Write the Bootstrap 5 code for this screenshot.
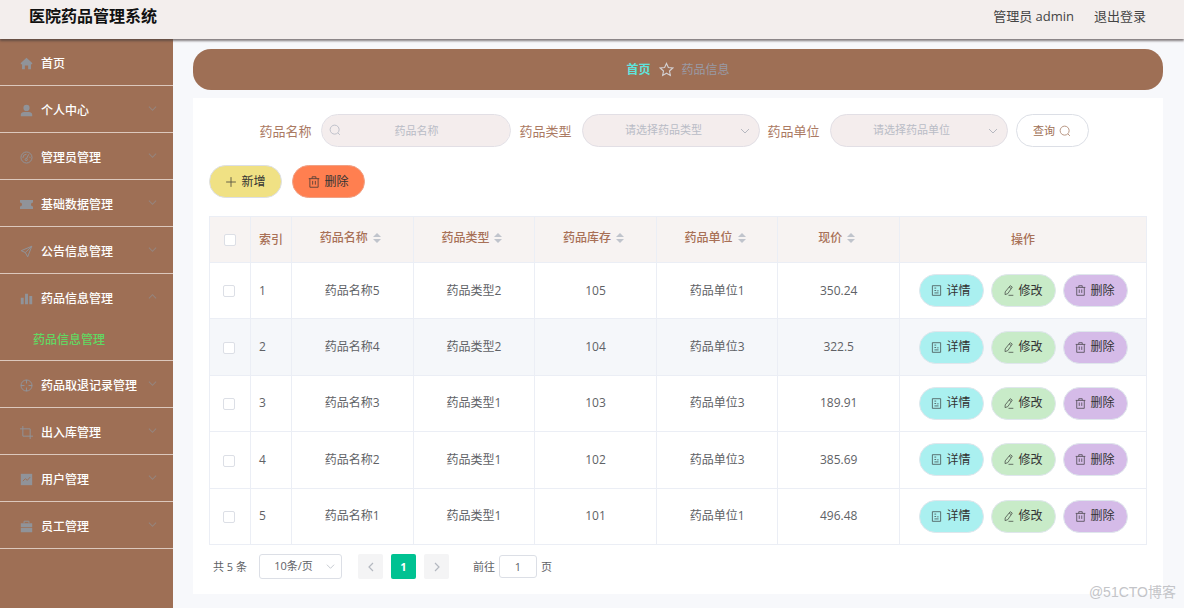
<!DOCTYPE html>
<html lang="zh-CN">
<head>
<meta charset="utf-8">
<meta name="viewport" content="width=device-width, initial-scale=1">
<title>医院药品管理系统</title>
<link href="https://cdn.jsdelivr.net/npm/bootstrap@5.3.0/dist/css/bootstrap.min.css" rel="stylesheet">
<style>
:root{--brown:#9e6f55;--rose:#f4eded;--line:#ebeef5}
body{font-family:"Open Sans","Noto Sans CJK SC",sans-serif;font-size:12px;line-height:18px;color:#606266;background:#f7f8fb}
svg{fill:none;stroke:currentColor;stroke-width:1.2;flex:none}
a{text-decoration:none}
.topbar{height:39px;background:#f3eeed;box-shadow:0 2px 2px rgba(70,60,60,.65);z-index:2;padding:0 38px 7px 29px;font-size:13px}
.topbar h1{font-size:16px;line-height:20px;color:#111}
.topbar a,.topbar span{color:#444}
.side{width:173px;background:var(--brown)}
.side .nav-link{height:47px;padding:3px 16px 0 20px;border-bottom:1px solid #dcc8bd;color:#fff;font-weight:500}
.side .open{border-bottom-color:transparent}
.side .sub{height:40px;padding:0 0 1px 33px;color:#62d862}
.side svg{color:#909399}
.side .chev{opacity:.6;margin-bottom:4px}
.main-area{padding:10px 21px 14px 20px;min-width:0}
.crumbs{height:41px;border-radius:18px;background:var(--brown);color:#999aa5;gap:8px}
.crumbs a{color:#5fe3dc;font-weight:700}
.panel{background:#fff;padding:16px 16px 15px}
.filters label{font-size:13px;color:#ab7a63}
.filters{gap:8px}
.fieldset{display:flex;align-items:center;gap:10px}
.pill{height:33px;border-radius:17px;border:1px solid #e2dfe5;font-size:11px;background-color:var(--rose);text-align:center;color:#b9bcc6}
input.pill{width:190px;padding:0 30px}
input.pill::placeholder{color:#b9bcc6;opacity:1}
select.pill{width:178px;padding:0 28px 0 14px;text-align-last:center;background-size:10px 10px;background-position:right 9px center;
--bs-form-select-bg-img:url("data:image/svg+xml,%3csvg xmlns='http://www.w3.org/2000/svg' viewBox='0 0 10 10'%3e%3cpath d='M1 3l4 4 4-4' fill='none' stroke='%23b6b8c0'/%3e%3c/svg%3e")}
.lens{left:8px;top:10px;color:#b9bcc6}
.tools{gap:10px;margin:18px 0}
.act{height:33px;width:73px;border:1px solid #dcdfe6;border-radius:17px;padding:0;font-size:12px;line-height:18px;color:#333;display:inline-flex;align-items:center;justify-content:center;gap:4px}
.act svg{opacity:.8}
.act-find{background:#fff;color:var(--brown);font-size:11px}
.act-add{background:#f0e184}.act-del{background:#ff7f50;border-color:#f0a084}
.act-group{gap:7px}
.act-row{width:65px;border-color:#dfe6ec}
.act-view{background:#aaf0f0}.act-edit{background:#c8ebc8}.act-drop{background:#d5bbe8}
.drugs{table-layout:fixed;height:329px;margin:0 0 9px;border:1px solid var(--line);--bs-table-color:#606266}
.drugs .w-box{width:41px}.drugs .w-act{width:247px}
.drugs th,.drugs td{border:1px solid var(--line);padding:0;text-align:center;vertical-align:middle}
.drugs thead th{height:46px;background:#f7f3f2;color:#a87056;font-weight:500}
.drugs .num{text-align:left;padding-left:8px}
.drugs tbody tr:nth-child(2) td{background:#f5f7fa}
.drugs .form-check-input{width:12px;height:12px;margin:0;border-color:#dcdfe6;border-radius:2px;display:inline-block;vertical-align:middle}
.drugs tbody .pick{padding-right:2px}
.sorter{fill:#c0c4cc;stroke:none;margin-left:5px;vertical-align:-1px}
.pager{font-size:11px;line-height:18px;padding-left:4px}
.pager .sel{width:83px;height:25px;font-size:11px;margin:0 16px 0 12px;padding:0 22px 0 8px;border-color:#dcdfe6;border-radius:3px;text-align-last:center;color:#606266;background-size:9px 9px;background-position:right 6px center;
--bs-form-select-bg-img:url("data:image/svg+xml,%3csvg xmlns='http://www.w3.org/2000/svg' viewBox='0 0 10 10'%3e%3cpath d='M1 3l4 4 4-4' fill='none' stroke='%23c0c4cc'/%3e%3c/svg%3e")}
.pg{width:25px;height:25px;padding:0;border:0;border-radius:2px;background:#f4f4f5;color:#b4b8c0;font-size:11px;display:inline-flex;align-items:center;justify-content:center}
.pg.now{background:#00c292;color:#fff;font-weight:700}
.pager .jump{width:38px;height:23px;padding:0;font-size:11px;text-align:center;border-color:#dcdfe6;border-radius:3px;color:#606266}
.stamp{position:absolute;right:8px;bottom:7px;font:14px/18px "Liberation Sans","Noto Sans CJK SC",sans-serif;color:#c3c4c8}
</style>
</head>
<body class="d-flex flex-column min-vh-100 position-relative">
<svg class="d-none">
  <symbol id="home" viewBox="0 0 16 16"><path d="M8 1 15 7.5V9h-1.500V15H10v-4.500H6V15H2.500V9H1V7.500z" fill="currentColor" stroke="none"/></symbol>
  <symbol id="user" viewBox="0 0 16 16"><path d="M8 1a3.800 3.800 0 1 1 0 7.600A3.800 3.800 0 0 1 8 1zM1 15v-2c0-2 2-3.200 4-3.200h6c2 0 4 1.200 4 3.200v2z" fill="currentColor" stroke="none"/></symbol>
  <symbol id="gauge" viewBox="0 0 16 16"><circle cx="8" cy="8" r="6.800"/><path d="M10.800 4 8 9.500M3.500 8.500A4.500 4.500 0 0 1 8 4M12.500 8.500 12 7"/><circle cx="7.700" cy="10.500" r="1.300"/></symbol>
  <symbol id="ticket" viewBox="0 0 16 16"><path d="M0 2.500h16v3a2.500 2.500 0 0 0 0 5v3H0v-3a2.500 2.500 0 0 0 0-5z" fill="currentColor" stroke="none"/></symbol>
  <symbol id="send" viewBox="0 0 16 16"><path d="M14.500 1.500 1.500 7l5 2.300L9.500 14.500z M6.500 9.300 14.500 1.500"/></symbol>
  <symbol id="bars" viewBox="0 0 16 16"><path d="M1 7h3.500v8H1zM6.200 2h3.600v13H6.200zM11.500 5H15v10h-3.500z" fill="currentColor" stroke="none"/></symbol>
  <symbol id="aim" viewBox="0 0 16 16"><circle cx="8" cy="8" r="6.800"/><path d="M8 1v4.500M8 10.500V15M1 8h4.500M10.500 8H15"/></symbol>
  <symbol id="crop" viewBox="0 0 16 16"><path d="M3.500 0v12.500H16M0 3.500h12.500V16"/></symbol>
  <symbol id="chart" viewBox="0 0 16 16"><path d="M1 1h14v14H1z" fill="currentColor" stroke="none"/><path d="m3.500 10 3-3 2.500 2 3.500-4" stroke="#9e6f55"/></symbol>
  <symbol id="bag" viewBox="0 0 16 16"><path d="M5 4V1.500h6V4" /><path d="M1 4h14v4.500H1zM1 9.500h14V15H1z" fill="currentColor" stroke="none"/></symbol>
  <symbol id="down" viewBox="0 0 10 10"><path d="m1 3 4 4 4-4"/></symbol>
  <symbol id="up" viewBox="0 0 10 10"><path d="m1 7 4-4 4 4"/></symbol>
  <symbol id="prev" viewBox="0 0 10 10"><path d="M7 1 3 5l4 4"/></symbol>
  <symbol id="next" viewBox="0 0 10 10"><path d="m3 1 4 4-4 4"/></symbol>
  <symbol id="search" viewBox="0 0 16 16"><circle cx="7.500" cy="7.500" r="6"/><path d="m12 12 2.500 2.500"/></symbol>
  <symbol id="plus" viewBox="0 0 16 16"><path d="M8 1.500v13M1.500 8h13"/></symbol>
  <symbol id="trash" viewBox="0 0 16 16"><path d="M1 3.500h14M5.500 3.500V1h5v2.500M2.500 3.500V15h11V3.500M6.200 6.500v5M9.800 6.500v5"/></symbol>
  <symbol id="doc" viewBox="0 0 16 16"><path d="M2 1h12v14H2zM5 4.500h2.500M5 8h2.500M5 11.500h6M9 8.500h2"/></symbol>
  <symbol id="pen" viewBox="0 0 16 16"><path d="m10.500 1 3 2L7 12.500l-4 1.500.200-4zM9 3.200l3 2M8 15h7"/></symbol>
  <symbol id="star" viewBox="0 0 16 16"><path d="m8 1.500 2 4.300 4.700.600-3.500 3.200.900 4.700L8 12l-4.100 2.300.900-4.700L1.300 6.400 6 5.800z"/></symbol>
  <symbol id="sort" viewBox="0 0 8 10"><path d="M4 0l4 4H0zM4 10l4-4H0z"/></symbol>
</svg>

<header class="topbar d-flex align-items-center justify-content-between position-relative">
  <h1 class="m-0 fw-bold">医院药品管理系统</h1>
  <div class="d-flex"><span class="me-3 pe-1">管理员 admin</span><a href="#">退出登录</a></div>
</header>

<div class="d-flex flex-grow-1">
  <nav class="side nav flex-column flex-nowrap flex-shrink-0" id="menu"></nav>
  <main class="main-area flex-grow-1 d-flex flex-column">
    <nav class="crumbs d-flex align-items-center justify-content-center mb-2">
      <a href="#">首页</a><svg width="15" height="15" color="#d3d0d2" stroke-width="1.6"><use href="#star"/></svg><span>药品信息</span>
    </nav>
    <section class="panel flex-grow-1">
      <form class="filters d-flex justify-content-center pe-2">
        <div class="fieldset"><label for="fname">药品名称</label>
          <div class="position-relative"><input id="fname" class="form-control pill" placeholder="药品名称"><svg class="lens position-absolute" width="12" height="12"><use href="#search"/></svg></div></div>
        <div class="fieldset"><label for="ftype">药品类型</label>
          <select id="ftype" class="form-select pill"><option>请选择药品类型</option></select></div>
        <div class="fieldset"><label for="funit">药品单位</label>
          <select id="funit" class="form-select pill"><option>请选择药品单位</option></select></div>
        <button type="button" class="btn act act-find">查询<svg width="12" height="12"><use href="#search"/></svg></button>
      </form>
      <div class="tools d-flex">
        <button type="button" class="btn act act-add"><svg width="12" height="12"><use href="#plus"/></svg>新增</button>
        <button type="button" class="btn act act-del"><svg width="12" height="12"><use href="#trash"/></svg>删除</button>
      </div>
      <table class="table drugs">
        <colgroup><col class="w-box"><col class="w-box"><col><col><col><col><col><col class="w-act"></colgroup>
        <thead><tr id="heads"></tr></thead>
        <tbody id="rows"></tbody>
      </table>
      <div class="pager d-flex align-items-center">
        <span>共 5 条</span>
        <select class="form-select sel" aria-label="每页条数"><option>10条/页</option></select>
        <div class="d-flex gap-2">
          <button class="pg" aria-label="上一页"><svg width="10" height="10"><use href="#prev"/></svg></button>
          <button class="pg now">1</button>
          <button class="pg" aria-label="下一页"><svg width="10" height="10"><use href="#next"/></svg></button>
        </div>
        <label for="jump" class="ms-4 me-1">前往</label><input id="jump" class="form-control jump" value="1"><span class="ms-1">页</span>
      </div>
    </section>
  </main>
</div>
<div class="stamp">@51CTO博客</div>

<script>
const icon = (n, s = 12, c = '') => `<svg class="${c}" width="${s}" height="${s}"><use href="#${n}"/></svg>`;
const menu = [['home','首页'],['user','个人中心'],['gauge','管理员管理'],['ticket','基础数据管理'],['send','公告信息管理'],['bars','药品信息管理'],['aim','药品取退记录管理'],['crop','出入库管理'],['chart','用户管理'],['bag','员工管理']];
document.getElementById('menu').innerHTML = menu.map(([i, t], n) => {
  const open = n === 5;
  const chev = n ? icon(open ? 'up' : 'down', 9, 'chev ms-auto') : '';
  return `<a href="#" class="nav-link d-flex align-items-center ${open ? 'open' : ''}">${icon(i, 13, 'me-2')}${t}${chev}</a>` +
    (open ? `<a href="#" class="nav-link sub d-flex align-items-center">药品信息管理</a>` : '');
}).join('');
const box = '<input type="checkbox" class="form-check-input" aria-label="选择">';
document.getElementById('heads').innerHTML = `<th>${box}</th><th class="num">索引</th>` +
  ['药品名称','药品类型','药品库存','药品单位','现价'].map(t => `<th class="pb-1 pe-1">${t}<svg class="sorter" width="8" height="10"><use href="#sort"/></svg></th>`).join('') + '<th>操作</th>';
const data = [[5,2,105,1,'350.24'],[4,2,104,3,'322.5'],[3,1,103,3,'189.91'],[2,1,102,3,'385.69'],[1,1,101,1,'496.48']];
const acts = [['view','doc','详情'],['edit','pen','修改'],['drop','trash','删除']];
document.getElementById('rows').innerHTML = data.map(([n, t, q, u, p], i) =>
  `<tr><td class="pick">${box}</td><td class="num">${i + 1}</td><td>药品名称${n}</td><td>药品类型${t}</td><td>${q}</td><td>药品单位${u}</td><td>${p}</td>
  <td><div class="act-group d-flex justify-content-center">${acts.map(([c, g, l]) => `<button class="btn act act-row act-${c}">${icon(g, 11)}${l}</button>`).join('')}</div></td></tr>`).join('');
</script>
<script src="https://cdn.jsdelivr.net/npm/bootstrap@5.3.0/dist/js/bootstrap.bundle.min.js"></script>
</body>
</html>
